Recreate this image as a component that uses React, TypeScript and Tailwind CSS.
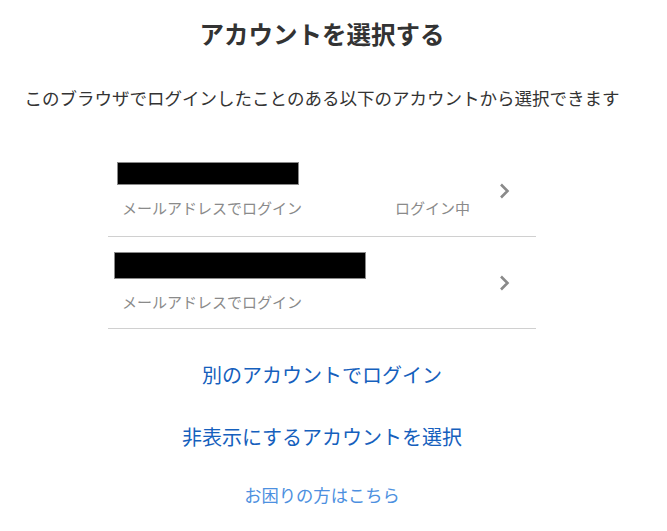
import React from "react";

const font = { fontFamily: '"Noto Sans CJK JP", "Noto Sans", sans-serif' };

function Chevron() {
  return (
    <svg width="11" height="16" viewBox="0 0 11 16" className="shrink-0">
      <path d="M2 1.5 L8.5 8 L2 14.5" fill="none" stroke="#8a8a8a" strokeWidth="2.6" />
    </svg>
  );
}

function Row({ boxW, boxH, boxMl, status }: { boxW: number; boxH: number; boxMl: string; status?: string }) {
  return (
    <div className="flex h-[92px] items-center border-b border-[#d0d0d0] pr-[26px]">
      <div className="flex flex-1 flex-col">
        <div
          className={`bg-black border border-[#8a8a8a] ${boxMl}`}
          style={{ width: boxW, height: boxH }}
        />
        <div className="mt-[12px] flex items-center justify-between pl-[14px] pr-[29px] text-[15px] leading-[22px] text-[#8a8a8a]">
          <span>メールアドレスでログイン</span>
          {status && <span>{status}</span>}
        </div>
      </div>
      <Chevron />
    </div>
  );
}

export default function App() {
  return (
    <div className="min-h-[531px] w-full bg-white" style={font}>
      <div className="flex w-[644px] flex-col items-center pt-[16px]">
        <h1 className="text-[24.5px] font-bold leading-[36px] text-[#333333]">アカウントを選択する</h1>
        <p className="mt-[33px] text-[17.5px] leading-[26px] text-[#333333]">
          このブラウザでログインしたことのある以下のアカウントから選択できます
        </p>
        <div className="mt-[34px] w-[428px]">
          <Row boxW={182} boxH={23} boxMl="ml-[9px]" status="ログイン中" />
          <Row boxW={252} boxH={27} boxMl="ml-[6px]" />
        </div>
        <a className="mt-[31px] text-[20px] leading-[30px] text-[#1560bd]">別のアカウントでログイン</a>
        <a className="mt-[32px] text-[20px] leading-[30px] text-[#1560bd]">非表示にするアカウントを選択</a>
        <a className="mt-[30px] text-[17.3px] leading-[26px] text-[#4d90e0]">お困りの方はこちら</a>
      </div>
    </div>
  );
}
